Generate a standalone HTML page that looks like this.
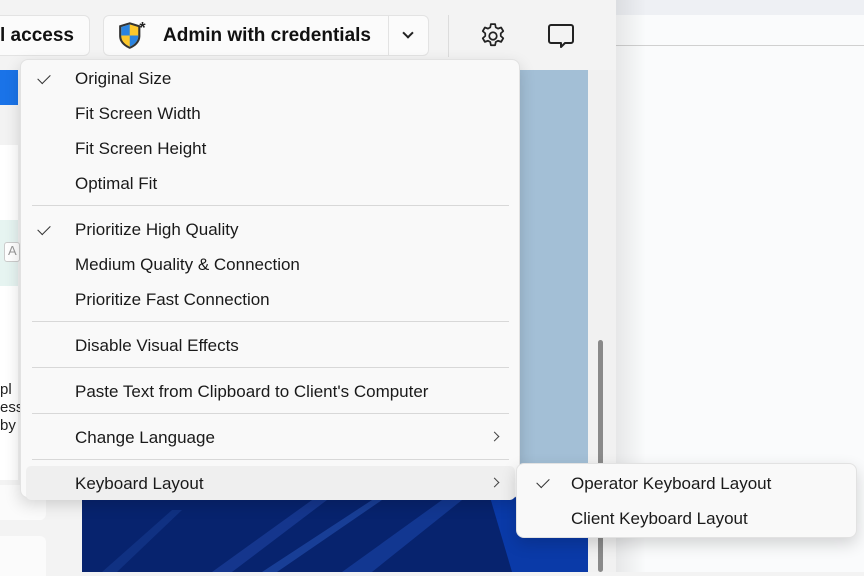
<!DOCTYPE html>
<html><head><style>
*{margin:0;padding:0;box-sizing:border-box}
body{width:864px;height:572px;overflow:hidden;position:relative;background:#f3f3f3;font-family:"Segoe UI","Liberation Sans",sans-serif;}
.abs{position:absolute}
.btn{position:absolute;background:#fbfbfb;border:1px solid #e3e3e3;border-radius:6px;}
.menu{position:absolute;background:#f9f9f9;border:1px solid #e2e2e2;border-radius:8px;box-shadow:0 6px 16px rgba(0,0,0,.16);}
.it{position:absolute;left:54px;font-size:17px;color:#1a1a1a;line-height:20px;}
.ck{position:absolute;left:17px;width:12px;height:7px;border-left:1.5px solid #333;border-bottom:1.5px solid #333;transform:rotate(-45deg);}
.sep{position:absolute;left:11px;width:477px;height:1px;background:#d8d8d8}
.arr{position:absolute;left:470px;width:7px;height:7px;border-right:1.5px solid #444;border-top:1.5px solid #444;transform:rotate(45deg)}
</style></head><body>
<div class="abs" style="left:616px;top:0;width:248px;height:572px;background:#fafbfc"></div>
<div class="abs" style="left:616px;top:0;width:248px;height:15px;background:#eef0f4"></div>
<div class="abs" style="left:616px;top:45px;width:248px;height:1px;background:#d0d0d0"></div>
<div class="abs" style="left:616px;top:0;width:30px;height:572px;background:linear-gradient(90deg,rgba(0,0,0,.08),rgba(0,0,0,0))"></div>
<div class="abs" style="left:0;top:70px;width:18px;height:35px;background:#1a73e8"></div>
<div class="abs" style="left:0;top:145px;width:18px;height:335px;background:#fff"></div>
<div class="abs" style="left:0;top:220px;width:18px;height:66px;background:#e6f4f1"></div>
<div class="abs" style="left:4px;top:242px;width:16px;height:20px;background:#fff;border:1px solid #ccc;border-radius:3px;font-size:13px;color:#999;padding-left:3px">A</div>
<div class="abs" style="left:0;top:381px;font-size:15px;color:#222;line-height:18px">pl<br>ess<br>by</div>
<div class="abs" style="left:0;top:485px;width:46px;height:35px;background:#fbfbfb;border-radius:0 6px 6px 0"></div>
<div class="abs" style="left:0;top:536px;width:46px;height:40px;background:#fbfbfb;border-radius:0 6px 0 0"></div>
<div class="abs" style="left:82px;top:70px;width:506px;height:502px;background:#a3bfd6;overflow:hidden">
<svg width="506" height="502" style="position:absolute;left:0;top:0">
<path d="M0 430 L440 430 L506 470 L506 502 L0 502 Z" fill="#07236e"/>
<path d="M400 400 L506 460 L506 502 L430 502 Z" fill="#0a3aa8"/>
<path d="M130 502 L230 430 L245 430 L150 502 Z" fill="#1b3f9a" opacity=".7"/>
<path d="M180 502 L290 430 L300 430 L195 502 Z" fill="#2450b0" opacity=".6"/>
<path d="M260 502 L360 430 L380 430 L290 502 Z" fill="#1a45a8" opacity=".6"/>
<path d="M20 502 L90 440 L100 440 L35 502 Z" fill="#173a90" opacity=".6"/>
</svg></div>
<div class="abs" style="left:588px;top:70px;width:28px;height:502px;background:#f1f1f1"></div>
<div class="abs" style="left:598px;top:340px;width:5px;height:232px;background:#8a8a8a;border-radius:3px"></div>
<div class="btn" style="left:-20px;top:15px;width:110px;height:41px"></div>
<div class="abs" style="left:0;top:25px;font-size:19px;font-weight:bold;color:#111;font-family:'Liberation Sans',sans-serif">l access</div>
<div class="btn" style="left:103px;top:15px;width:326px;height:41px"></div>
<div class="abs" style="left:388px;top:16px;width:1px;height:39px;background:#e3e3e3"></div>
<svg class="abs" style="left:117px;top:18px" width="34" height="34" viewBox="0 0 32 32">
<path d="M12 4 L22 7 L22 17 C22 23 17 27 12 29 C7 27 2 23 2 17 L2 7 Z" fill="#333"/>
<path d="M12 6 L20 8.5 L20 17 C20 21.5 16.5 25 12 27 C7.5 25 4 21.5 4 17 L4 8.5 Z" fill="#fcc72c"/>
<path d="M12 6 L12 16.5 L4 16.5 L4 8.5 Z" fill="#2a83e0"/><path d="M12 16.5 L20 16.5 L20 17 C20 21.5 16.5 25 12 27 Z" fill="#2a83e0"/>
<text x="21" y="14" font-size="15" font-weight="bold" fill="#222" font-family="Liberation Sans">*</text></svg>
<div class="abs" style="left:163px;top:25px;font-size:19px;font-weight:bold;color:#111;font-family:'Liberation Sans',sans-serif">Admin with credentials</div>
<div class="abs" style="left:404px;top:29px;width:8px;height:8px;border-right:2px solid #222;border-bottom:2px solid #222;transform:rotate(45deg)"></div>
<div class="abs" style="left:448px;top:15px;width:1px;height:42px;background:#dcdcdc"></div>
<svg class="abs" style="left:478px;top:21px" width="30" height="30" viewBox="0 0 24 24" fill="none" stroke="#222" stroke-width="1.4"><path d="M10.3 2.5h3.4l.5 2.6 1.8 1 2.5-.9 1.7 2.9-2 1.8v2.1l2 1.8-1.7 2.9-2.5-.9-1.8 1-.5 2.6h-3.4l-.5-2.6-1.8-1-2.5.9-1.7-2.9 2-1.8v-2.1l-2-1.8 1.7-2.9 2.5.9 1.8-1z" stroke-linejoin="round"/><circle cx="12" cy="12" r="3"/></svg>
<svg class="abs" style="left:546px;top:22px" width="30" height="28" viewBox="0 0 30 28" fill="none" stroke="#222" stroke-width="2"><path d="M5 3h20a2 2 0 0 1 2 2v14a2 2 0 0 1-2 2h-6l-4 4v-4H5a2 2 0 0 1-2-2V5a2 2 0 0 1 2-2z" stroke-linejoin="round"/></svg>
<div class="menu" style="left:20px;top:59px;width:500px;height:439px">
<div class="ck" style="top:14px"></div><div class="it" style="top:9px">Original Size</div>
<div class="it" style="top:44px">Fit Screen Width</div>
<div class="it" style="top:79px">Fit Screen Height</div>
<div class="it" style="top:114px">Optimal Fit</div>
<div class="sep" style="top:145px"></div>
<div class="ck" style="top:165px"></div><div class="it" style="top:160px">Prioritize High Quality</div>
<div class="it" style="top:195px">Medium Quality &amp; Connection</div>
<div class="it" style="top:230px">Prioritize Fast Connection</div>
<div class="sep" style="top:261px"></div>
<div class="it" style="top:276px">Disable Visual Effects</div>
<div class="sep" style="top:307px"></div>
<div class="it" style="top:322px">Paste Text from Clipboard to Client's Computer</div>
<div class="sep" style="top:353px"></div>
<div class="it" style="top:368px">Change Language</div><div class="arr" style="top:373px"></div>
<div class="sep" style="top:399px"></div>
<div class="abs" style="left:5px;top:406px;width:489px;height:34px;background:#efefef;border-radius:5px"></div>
<div class="it" style="top:414px">Keyboard Layout</div><div class="arr" style="top:419px"></div>
</div>
<div class="menu" style="left:516px;top:463px;width:341px;height:75px">
<div class="ck" style="top:14px;left:20px"></div><div class="it" style="top:10px">Operator Keyboard Layout</div>
<div class="it" style="top:45px">Client Keyboard Layout</div>
</div>
</body></html>
